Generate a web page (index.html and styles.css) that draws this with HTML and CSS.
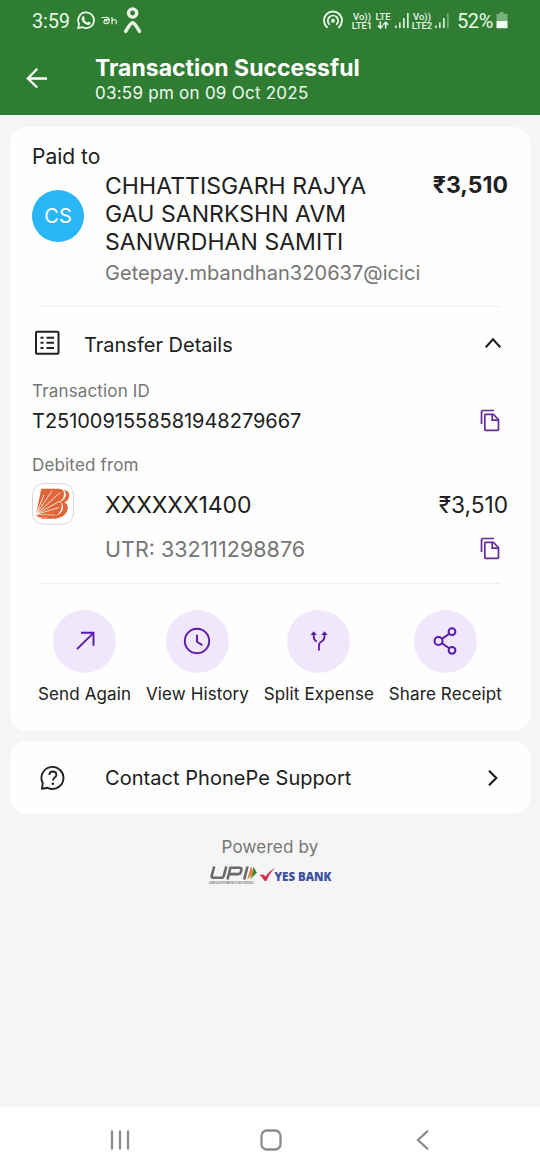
FILE: index.html
```html
<!DOCTYPE html>
<html lang="en">
<head>
<meta charset="utf-8">
<title>Transaction Successful</title>
<link rel="stylesheet" href="styles.css">
</head>
<body>
<div class="screen">
  <header class="header">
    <div class="status">
      <span class="clock">3:59</span>
      <svg class="notices" width="72" height="34" viewBox="74 4 72 34" fill="none" stroke="#e9f8e6">
        <path d="M78 28.3l1.2-4.2a7.9 7.9 0 1 1 3 3z" stroke-width="1.7" stroke-linejoin="round"/>
        <path d="M82.3 16.6l1.4-.5 1.3 2.4-.8 1.2q1 2 3 2.8l1.2-1 2.3 1.2-.3 1.4q-1 1.2-2.500.9c-3.600-.7-6-3.600-6.300-6z" fill="#e9f8e6" stroke="none"/>
        <path d="M101.500 17.500h4.500q3-.3 3.200 2.500.1 3.700-3 3.700-2.400-.2-2.200-2.200.4-1.700 2-1.400 1.300.6.500 1.900M104 19.500h6M112 17v7.200m0-2.700q.4-2 2.300-2t1.900 2v2.700" stroke-width="1.200"/>
        <circle cx="132.600" cy="13" r="4.100" stroke-width="3.400"/>
        <path d="M125.700 31.300q5-8.500 6.900-8.500t6.900 8.500" stroke-width="3.500" stroke-linecap="round" stroke-linejoin="round"/>
      </svg>
      <span class="spacer"></span>
      <svg class="hotspot" width="22" height="20" viewBox="0 0 22 20" fill="none" stroke="#e9f8e6" stroke-width="1.900" stroke-linecap="round"><path d="M5 17.200a9 9 0 1 1 12 0M7.200 14.100a5.100 5.100 0 1 1 7.600 0"/><circle cx="11" cy="10.700" r="2" fill="#e9f8e6" stroke="none"/></svg>
      <span class="net vo1"><span>Vo))</span><span>LTE1</span></span>
      <span class="net lte"><span>LTE</span><svg width="12" height="9" viewBox="0 0 12 8" stroke="#e9f8e6" stroke-width="1.500" fill="none"><path d="M3.300 0v6M.8 4l2.500 2.700L5.800 4M8.700 7V1M6.200 3.300l2.500-2.500 2.500 2.500"/></svg></span>
      <svg class="bars" width="15" height="16" viewBox="0 0 15 16" fill="#d9f0d8"><path d="M0 12.500h1.700V15H0zM4 9.500h1.700V15H4zM8 5h1.700v10H8zM12 0h1.700v15H12z"/></svg>
      <span class="net vo2"><span>Vo))</span><span>LTE2</span></span>
      <svg class="bars" width="15" height="16" viewBox="0 0 15 16" fill="#d9f0d8"><path d="M0 12.500h1.700V15H0zM4 9.500h1.700V15H4zM8 5h1.700v10H8z"/><path d="M12 0h1.700v15H12z" opacity=".4"/></svg>
      <span class="pct">52%</span>
      <svg class="battery" width="12" height="17" viewBox="0 0 12 17"><path d="M3.500 0h4v2H11q.5 0 .5.500V9H.5V2.500Q.5 2 1 2h2.500z" fill="#76b27a"/><path d="M.5 9h11v6.500q0 .7-.7.700H1.200q-.7 0-.7-.7z" fill="#f3fff2"/></svg>
    </div>
    <div class="titlebar">
      <svg class="back" width="22" height="22" viewBox="0 0 22 22" fill="none" stroke="#fff" stroke-width="2.300"><path d="M21 11.500H2M11.300 1.800L1.800 11.500l9.500 9"/></svg>
      <div class="titles">
        <h1 class="title">Transaction Successful</h1>
        <p class="date">03:59 pm on 09 Oct 2025</p>
      </div>
    </div>
  </header>

  <main class="main">
    <section class="card payment">
      <h2 class="paid">Paid to</h2>
      <div class="payee">
        <span class="avatar">CS</span>
        <div class="who">
          <p class="name">CHHATTISGARH RAJYA<br>GAU SANRKSHN AVM<br>SANWRDHAN SAMITI</p>
          <p class="vpa">Getepay.mbandhan320637@icici</p>
        </div>
        <strong class="amount">₹3,510</strong>
      </div>
      <hr class="rule">
      <div class="details">
        <svg width="26" height="26" viewBox="0 0 26 26" fill="none" stroke="#222" stroke-width="2"><rect x="2" y="1.700" width="22.500" height="22" rx="1"/><path d="M6.500 7.700h3M6.500 12.700h3M6.500 18h3M12.500 7.700H20M12.500 12.700H20M12.500 18H20"/></svg>
        <span class="details-title">Transfer Details</span>
        <svg width="18" height="12" viewBox="0 0 18 12" fill="none" stroke="#1d1d1d" stroke-width="2.100"><path d="M1.700 10.200L9 2.200l7.300 8"/></svg>
      </div>
      <p class="label">Transaction ID</p>
      <div class="idrow">
        <span class="txn">T2510091558581948279667</span>
        <svg class="copy" width="20" height="23" viewBox="0 0 20 23" fill="none" stroke="#64289e" stroke-width="1.700"><path d="M1.500 15V3.200q0-1.700 1.700-1.700H14"/><path d="M5.800 5.300h7.500l5.200 5.200v10q0 .8-.8.800H5.600q-.8 0-.8-.8V6.100q0-.8 1-.8zM12.200 5.500v5.700h6"/></svg>
      </div>
      <p class="label from">Debited from</p>
      <div class="bank">
        <svg class="logo" width="43" height="42" viewBox="0 0 43 42"><rect x=".5" y=".6" width="41" height="40.600" rx="11" fill="#fff" stroke="#d8d4db"/><path d="M9.200 5.800H27q5.300.3 5 5.400-.3 5.800-5.400 7.600 3.700.8 3 5.500-1.300 7.700-9.600 9.900L7 34.500 4 32z" fill="#df6638"/><path d="M31.500 7q6 .3 5.800 5.500-.2 5-5 7 4 1.200 3.500 6-1.200 8.500-12 10.200H9.500l-.7-1q10.700-.2 17-2.900 4.900-2.500 5.200-7.700.2-3.300-2.700-5.100 5.100-2.200 5.500-7.400.1-3.200-2.300-4.600z" fill="#df6638"/><path d="M4 31.500L12 12M4 31.500L20 8M4 31.500L28 9.500M4 31.500l23-13M4 31.500l23-7" stroke="#fff" stroke-width=".8"/><path d="M4 31.500l19 .5" stroke="#fff" stroke-width=".6"/></svg>
        <span class="acct">XXXXXX1400</span>
        <span class="debit">₹3,510</span>
      </div>
      <div class="utr">
        <span class="utr-no">UTR: 332111298876</span>
        <svg class="copy" width="20" height="23" viewBox="0 0 20 23" fill="none" stroke="#64289e" stroke-width="1.700"><path d="M1.500 15V3.200q0-1.700 1.700-1.700H14"/><path d="M5.800 5.300h7.500l5.200 5.200v10q0 .8-.8.800H5.600q-.8 0-.8-.8V6.100q0-.8 1-.8zM12.200 5.500v5.700h6"/></svg>
      </div>
      <hr class="rule">
      <div class="actions">
        <div class="action"><span class="disc"><svg width="30" height="30" viewBox="0 0 30 30" fill="none" stroke="#5a1aa9" stroke-width="1.900"><path d="M7 23.200L23.500 6.800M11 6.800h12.500v13"/></svg></span><span class="act-text">Send Again</span></div>
        <div class="action"><span class="disc"><svg width="30" height="30" viewBox="0 0 30 30" fill="none" stroke="#5a1aa9" stroke-width="1.900"><circle cx="15" cy="15" r="12.200"/><path d="M15 8.800v7l5.500 3.400"/></svg></span><span class="act-text">View History</span></div>
        <div class="action"><span class="disc"><svg width="30" height="30" viewBox="0 0 30 30" fill="none" stroke="#5a1aa9" stroke-width="1.800"><path d="M9.700 8v2.500q0 3.500 3 5.200M20.500 8v2.500q0 3.500-3 5-2.500 1.300-2.500 4v5"/><path d="M6.500 9l3.200-3.800L12.900 9zM17.300 9l3.200-3.800L23.700 9z" fill="#5a1aa9" stroke="none"/></svg></span><span class="act-text">Split Expense</span></div>
        <div class="action"><span class="disc"><svg width="30" height="30" viewBox="0 0 30 30" fill="none" stroke="#5a1aa9" stroke-width="2"><circle cx="8.500" cy="15" r="4"/><circle cx="22" cy="5.700" r="3.400"/><circle cx="22" cy="24.300" r="3.400"/><path d="M12 12.900l7.200-5.200M12 17.200l7.200 5"/></svg></span><span class="act-text">Share Receipt</span></div>
      </div>
    </section>

    <section class="card support">
      <svg width="26" height="26" viewBox="0 0 26 26" fill="none" stroke="#222" stroke-width="1.900"><path d="M1.900 23.800l.9-5.600A11 11 0 1 1 7.600 22.800z" stroke-linejoin="round"/><path d="M9.300 10q.2-3.500 3.600-3.500 3.500.1 3.500 3.200 0 1.600-1.700 2.800t-1.700 3.100"/><circle cx="12.900" cy="18.800" r="1.300" fill="#222" stroke="none"/></svg>
      <span class="support-text">Contact PhonePe Support</span>
      <svg width="12" height="18" viewBox="0 0 12 18" fill="none" stroke="#1d1d1d" stroke-width="2.200"><path d="M2 1.800L9.300 9 2 16.200"/></svg>
    </section>

    <footer class="powered">
      <span class="by">Powered by</span>
      <svg class="partners" width="124" height="22" viewBox="208 864 124 22">
        <g fill="none" stroke="#6a6a6c" stroke-width="2.600"><path d="M214.200 866.500l-2.500 9.300q-.5 2 1.500 2h8.500q1.500 0 2-1.600l2.600-9.700M227.500 879.500l2.900-11.700h9.300q2.200 0 1.700 2.100l-.7 2.500q-.5 1.700-2.400 1.700h-9.100M244.200 879.500l3.300-13"/></g>
        <path d="M251 866.500l3.200 6-7 7z" fill="#ed8034"/><path d="M253.200 866.500l3.800 6.200-7.200 6.800 3.300-7z" fill="#358b42"/>
        <text x="209" y="883.500" font-family="Inter, sans-serif" font-size="3" font-weight="600" fill="#6b6b6d" textLength="45" lengthAdjust="spacingAndGlyphs">UNIFIED PAYMENTS INTERFACE</text>
        <path d="M259.500 875q4-1.500 6 1.500 4-5.500 9.700-9-5.500 5.500-8.700 13.300-1.400.5-2.400-.3-1.600-4-4.600-5.500z" fill="#e02c4b"/>
        <text x="274.500" y="880.500" font-family="Open Sans, sans-serif" font-size="11.500" font-weight="800" fill="#3c51a0" textLength="57" lengthAdjust="spacingAndGlyphs">YES BANK</text>
      </svg>
    </footer>
  </main>

  <nav class="nav">
    <svg width="20" height="20" viewBox="0 0 20 20" stroke="#8c8c8c" stroke-width="2.300" stroke-linecap="round"><path d="M2 1.300v17.400M10 1.300v17.400M18 1.300v17.400"/></svg>
    <svg class="home" width="22" height="22" viewBox="0 0 22 22" fill="none" stroke="#8c8c8c" stroke-width="2.300"><rect x="1.500" y="1.500" width="19" height="19" rx="5.500"/></svg>
    <svg width="13" height="20" viewBox="0 0 13 20" fill="none" stroke="#8c8c8c" stroke-width="2.300" stroke-linecap="round"><path d="M11.300 1.300L2 10l9.300 8.700"/></svg>
  </nav>
</div>
</body>
</html>
```
FILE: styles.css
```css
* { box-sizing: border-box; margin: 0; padding: 0; }
body { background: #f5f5f5; font-family: Inter, "Noto Sans", sans-serif; color: #202020; }
svg { display: block; flex: none; }
.screen { width: 540px; height: 1170px; display: flex; flex-direction: column; overflow: hidden; white-space: nowrap; }
.header { height: 115px; background: #2f7d32; flex: none; }

.status { height: 42px; display: flex; align-items: center; padding-left: 32px; padding-right: 32px; font-family: Roboto, sans-serif; color: #e9f8e6; }
.clock { width: 42px; font-size: 20px; letter-spacing: -.2px; }
.spacer { flex: 1; }
.hotspot { margin-right: 7px; margin-top: -2px; }
.net { display: flex; flex-direction: column; align-items: center; font-size: 9.5px; line-height: 9px; font-weight: 500; margin-top: -1px; }
.vo1, .vo2 { width: 22px; }
.lte { width: 18px; margin-left: 1px; margin-right: 3px; }
.bars { margin-top: -1px; }
.vo2 { margin-left: 1px; margin-right: 2px; }
.pct { width: 39px; margin-left: 7px; font-size: 20px; letter-spacing: -.4px; }
.battery { margin-top: -2px; }

.titlebar { display: flex; align-items: flex-start; padding: 12px 0 0 26px; }
.back { margin-top: 13px; margin-right: 47px; }
.title { color: #fff; font-size: 23px; line-height: 28px; font-weight: 700; }
.date { color: #eff9ee; font-size: 17px; line-height: 22px; letter-spacing: .25px; }

.main { flex: 1; padding: 12px 10px 0; display: flex; flex-direction: column; }
.card { background: #fefefe; border-radius: 16px; flex: none; }
.payment { height: 604px; padding: 15px 22px 0; }
.paid { font-size: 21px; line-height: 30px; font-weight: 400; }
.payee { display: flex; align-items: flex-start; }
.avatar { width: 52px; height: 52px; border-radius: 50%; margin: 18px 21px 0 0; background: #29b6f6; color: #fff; font-size: 20px; line-height: 52px; text-align: center; }
.who { flex: 1; height: 134px; }
.name { font-size: 23px; line-height: 28px; letter-spacing: .06px; }
.vpa { font-size: 20px; line-height: 28px; margin-top: 3px; letter-spacing: .04px; color: #757575; }
.amount { font-size: 23px; line-height: 28px; font-weight: 700; margin-top: -1px; }
.rule { border: 0; height: 1px; margin: 0 8px; background: #eee; }
.details { height: 72px; display: flex; align-items: center; padding: 0 6px 0 2px; }
.details-title { flex: 1; margin-left: 24px; font-size: 20px; padding-top: 3px; }
.label { font-size: 17px; line-height: 24px; color: #757575; letter-spacing: .16px; }
.idrow { height: 36px; display: flex; align-items: center; justify-content: space-between; padding-right: 8px; }
.idrow .copy { margin-top: -1px; }
.txn { font-size: 20px; letter-spacing: -.03px; }
.from { margin-top: 14px; }
.bank { height: 54px; display: flex; align-items: center; }
.acct { flex: 1; margin-left: 30px; font-size: 23px; letter-spacing: -.1px; padding-top: 1px; }
.debit { font-size: 22.700px; }
.utr { height: 52px; display: flex; align-items: flex-start; justify-content: space-between; padding: 6px 8px 0 73px; }
.utr-no { font-size: 21.500px; line-height: 24px; color: #757575; }
.actions { display: flex; padding: 26px 6px 0; justify-content: space-between; }
.action { display: flex; flex-direction: column; align-items: center; }
.disc { width: 63px; height: 63px; border-radius: 50%; background: #f1e7fc; display: flex; align-items: center; justify-content: center; }
.disc svg { margin-top: -1px; }
.act-text { font-size: 17px; line-height: 22px; margin-top: 10px; letter-spacing: .12px; }

.support { height: 73px; margin-top: 10px; display: flex; align-items: center; padding: 0 31px 0 30px; }
.support-text { flex: 1; margin-left: 39px; font-size: 20px; letter-spacing: .04px; }
.powered { display: flex; flex-direction: column; align-items: center; padding-top: 21px; }
.by { font-size: 17px; line-height: 24px; color: #757575; letter-spacing: .2px; }
.partners { margin-top: 5px; }

.nav { height: 63px; flex: none; background: #fff; display: flex; align-items: center; justify-content: space-between; padding: 3px 111px 0 110px; }
.home { margin-right: 4px; }
```
